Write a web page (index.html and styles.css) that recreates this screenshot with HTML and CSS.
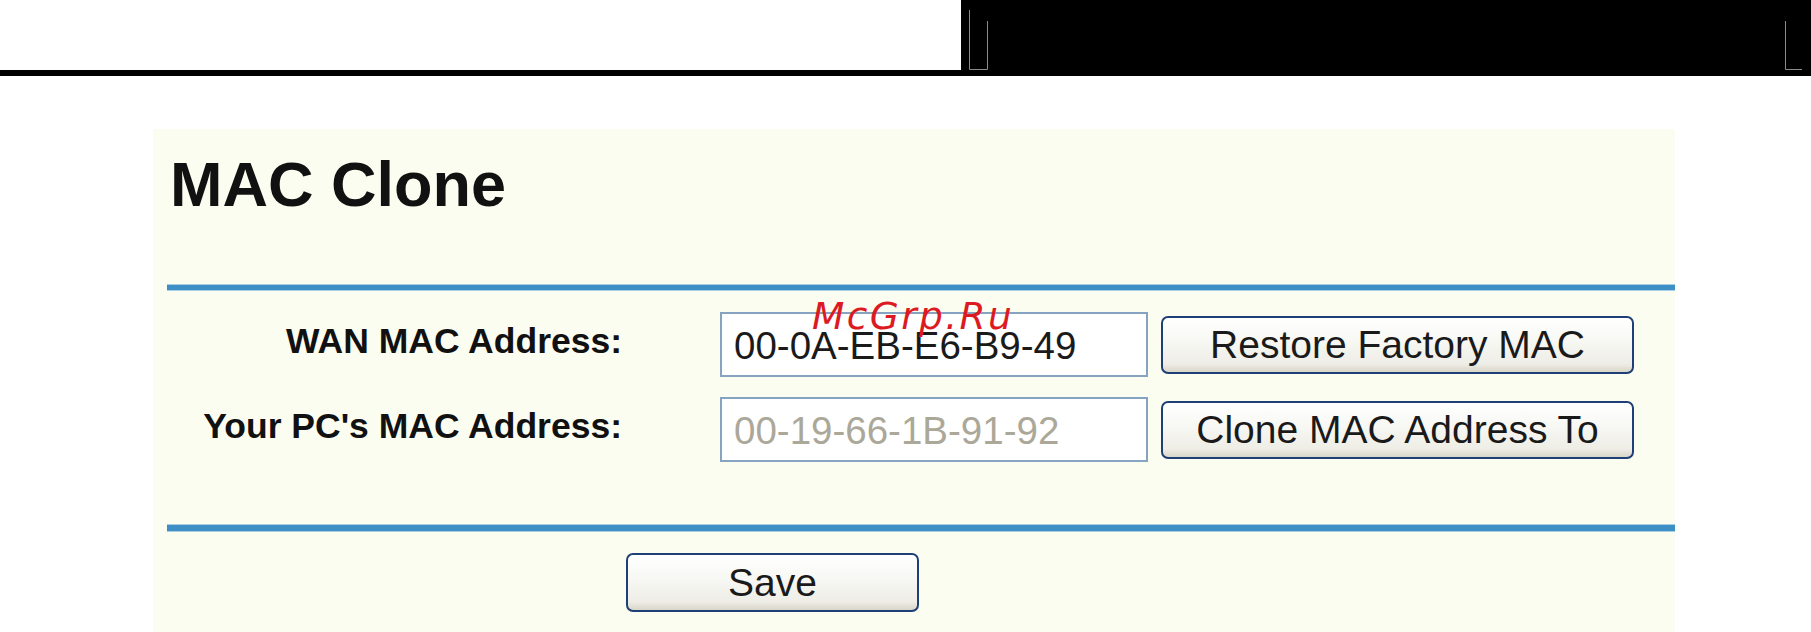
FILE: index.html
```html
<!DOCTYPE html>
<html>
<head>
<meta charset="utf-8">
<title>MAC Clone</title>
<link rel="stylesheet" href="styles.css">
</head>
<body>
<div class="header">
  <div class="header-left"></div>
  <div class="header-right">
    <svg class="brackets" width="850" height="76" viewBox="0 0 850 76">
      <path d="M8.5 10 V69.5 H26.5 V21" fill="none" stroke="#8a8a8a" stroke-width="1"/>
      <path d="M824.5 21 V69.5 H841" fill="none" stroke="#8a8a8a" stroke-width="1"/>
    </svg>
  </div>
</div>
<div class="panel">
  <h1 class="title">MAC Clone</h1>
  <div class="rule"></div>
  <div class="form">
    <div class="row">
      <div class="label">WAN MAC Address:</div>
      <input class="field" type="text" value="00-0A-EB-E6-B9-49">
      <button class="btn btn-wide">Restore Factory MAC</button>
    </div>
    <div class="row">
      <div class="label">Your PC's MAC Address:</div>
      <input class="field field-disabled" type="text" value="00-19-66-1B-91-92" disabled>
      <button class="btn btn-wide">Clone MAC Address To</button>
    </div>
  </div>
  <div class="rule rule-bottom"></div>
  <div class="save-row">
    <button class="btn btn-save">Save</button>
  </div>
  <div class="watermark">McGrp.Ru</div>
</div>
</body>
</html>
```

FILE: styles.css
```css
html, body {
  margin: 0;
  padding: 0;
  background: #ffffff;
  overflow: hidden;
}

body {
  width: 1811px;
  height: 632px;
  font-family: "Liberation Sans", Arial, sans-serif;
}

.header {
  display: flex;
  height: 76px;
  background: #000000;
}

.header-left {
  width: 961px;
  height: 70px;
  background: #ffffff;
}

.header-right {
  flex: 1;
  position: relative;
}

.brackets {
  position: absolute;
  left: 0;
  top: 0;
}

.panel {
  position: relative;
  margin: 53px 0 0 153px;
  width: 1508px;
  height: 503px;
  padding-left: 14px;
  background: #fcfdf1;
  box-sizing: content-box;
}

.title {
  margin: 0;
  padding: 19px 0 0 3px;
  font-size: 63px;
  line-height: 72px;
  font-weight: bold;
  color: #111111;
  height: 72px;
}

.rule {
  margin-top: 64px;
  height: 5px;
  background: #3d8fc5;
  border-top: 1px solid #a6cfe3;
  border-bottom: 1px solid #a6cfe3;
}

.form {
  display: flex;
  flex-direction: column;
  gap: 20px;
  padding-top: 21px;
}

.row {
  display: flex;
  align-items: center;
  height: 65px;
}

.label {
  width: 455px;
  margin-right: 98px;
  text-align: right;
  font-weight: bold;
  font-size: 35.5px;
  color: #111111;
  padding-bottom: 7px;
  white-space: nowrap;
}

.field {
  width: 428px;
  height: 65px;
  box-sizing: border-box;
  margin: 0 13px 0 0;
  border: 2px solid #86a3c1;
  background: #ffffff;
  padding: 3px 0 0 12px;
  font-family: "Liberation Sans", Arial, sans-serif;
  font-size: 38.5px;
  color: #1a1a1a;
  outline: none;
}

.field-disabled {
  color: #aca899;
  -webkit-text-fill-color: #aca899;
}

.btn {
  box-sizing: border-box;
  border: 2px solid #1f3f78;
  border-radius: 7px;
  background: linear-gradient(#ffffff 0%, #f7f7f3 45%, #eeede6 85%, #d9d5c8 100%);
  font-family: "Liberation Sans", Arial, sans-serif;
  font-size: 39px;
  color: #1a1a1a;
  padding: 0;
}

.btn-wide {
  width: 473px;
  height: 58px;
}

.rule-bottom {
  margin-top: 62px;
  height: 6px;
}

.save-row {
  padding: 21px 0 0 459px;
}

.btn-save {
  width: 293px;
  height: 59px;
}

.watermark {
  position: absolute;
  left: 659px;
  top: 167px;
  font-family: "DejaVu Sans", "Liberation Sans", sans-serif;
  font-style: italic;
  font-size: 37.5px;
  letter-spacing: 2.4px;
  color: #dd1a22;
  line-height: 40px;
}
```
